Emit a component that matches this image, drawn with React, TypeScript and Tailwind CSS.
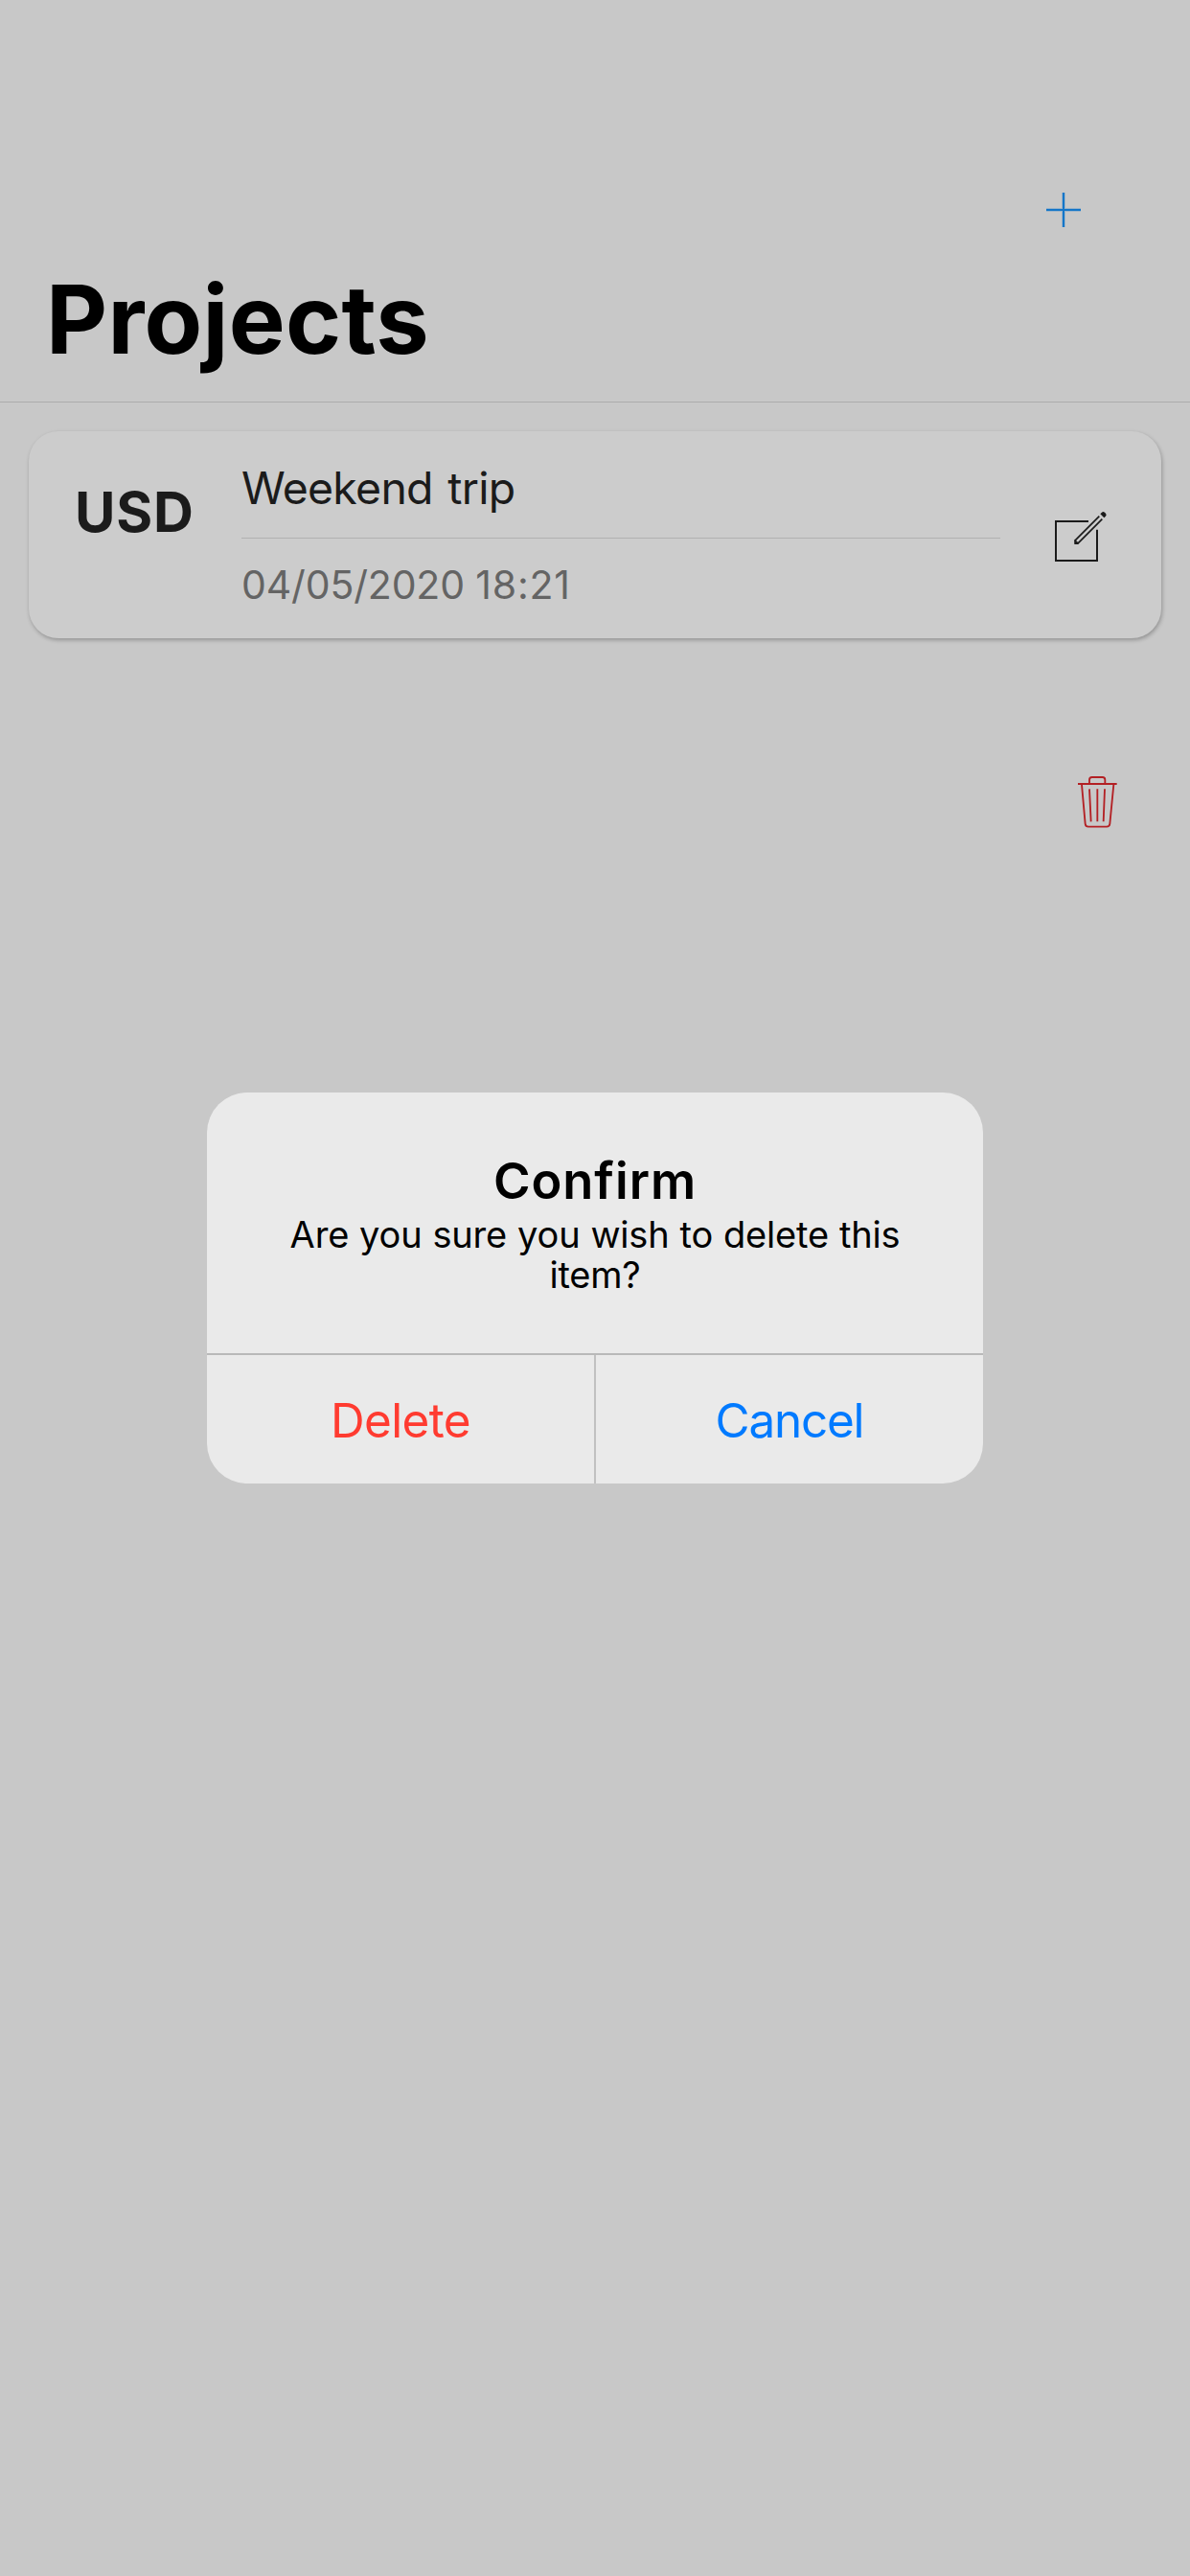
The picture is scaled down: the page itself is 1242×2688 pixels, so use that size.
function PlusIcon() {
  return (
    <svg width="36" height="36" viewBox="0 0 36 36" fill="none">
      <path d="M0 18H36M18 0V36" stroke="#1a7acb" strokeOpacity="0.25" strokeWidth="4" />
      <path d="M0 18H36M18 0V36" stroke="#1476c8" strokeWidth="2" />
    </svg>
  );
}

function EditIcon() {
  return (
    <svg width="56" height="56" viewBox="60 66 168 168" fill="none" stroke="#1b1b1b">
      <path d="M168 102H66V225H195V128" strokeWidth="6" />
      <path d="M202 86L128 160V169H137L211 95" strokeWidth="5" />
      <path d="M123.500 158L138 172L136 174H124Z" fill="#1b1b1b" stroke="none" />
      <path d="M205 79L210 74Q214 70 219 74L222 77Q226 82 222 86L217 91Z" fill="#1b1b1b" stroke="none" />
    </svg>
  );
}

function TrashIcon() {
  return (
    <svg width="43" height="58" viewBox="72 54 129 174" fill="none" stroke="#b32024" strokeWidth="5.5">
      <path d="M75 84H197" strokeWidth="6" />
      <path d="M111 84V71Q111 63 119 63H152Q160 63 160 71V84" />
      <path d="M87 86L98 209Q99 218 108 218H165Q174 218 175 209L187 86" />
      <path d="M111 100L116 202M136 100V202M159 100L155 202" />
    </svg>
  );
}

function Header() {
  return (
    <header className="border-b border-[#acacac] pt-[201px] pb-[26px]">
      <div className="flex justify-end pr-[114px]">
        <button aria-label="Add project">
          <PlusIcon />
        </button>
      </div>
      <h1 className="mt-9 pl-12 text-[99px] leading-[120px] font-bold tracking-[0.28px] text-black">Projects</h1>
    </header>
  );
}

function ProjectRow() {
  return (
    <article className="mx-[30px] mt-[30px] flex h-[216px] rounded-[31px] bg-[#cccccc] text-[#1b1b1b] shadow-[1px_2px_4px_rgba(0,0,0,0.27)]">
      <div className="w-[222px] pt-12 pl-12 text-[58px] leading-[72px] font-bold tracking-[0.8px]">USD</div>
      <div className="w-[792px] pt-[29px]">
        <div className="text-[46.4px] leading-[60px] tracking-[-0.7px] [word-spacing:3px]">Weekend trip</div>
        <div className="mt-[22px] h-px bg-[#b1b1b1]" />
        <div className="mt-[23px] text-[41px] leading-[50px] tracking-[-0.15px] text-[#646464]">
          04/05/2020 <span className="tracking-[0.8px]">18:21</span>
        </div>
      </div>
      <button aria-label="Edit project" className="mt-[82px] ml-14 h-14">
        <EditIcon />
      </button>
    </article>
  );
}

function ConfirmDialog() {
  return (
    <div className="absolute inset-0 flex items-center justify-center">
      <div
        role="alertdialog"
        className="flex h-[408.67px] w-[810px] flex-col overflow-hidden rounded-[42px] bg-[#eaeaea] text-center text-black"
      >
        <div className="flex-1 pt-[60.33px]">
          <h2 className="text-[52.4px] leading-[64px] font-semibold tracking-[0.96px]">Confirm</h2>
          <p className="mx-auto mt-[3px] w-[690px] text-[38px] leading-[42px] tracking-[-0.18px] [word-spacing:0.5px]">
            Are you sure you wish to delete this item?
          </p>
        </div>
        <div className="flex h-[136px] border-t-2 border-[#b9b9b9] text-[49.4px] leading-[60px]">
          <button className="flex-1 border-r border-[#c1c1c1] pt-[2px] tracking-[-0.6px] text-[#ff3b30]">Delete</button>
          <button className="flex-1 border-l border-[#c1c1c1] pt-[2px] tracking-[-1.2px] text-[#007aff]">Cancel</button>
        </div>
      </div>
    </div>
  );
}

export default function App() {
  return (
    <div className="relative h-[2688px] w-[1242px] overflow-hidden bg-[#c8c8c8] font-['Inter',sans-serif]">
      <Header />
      <main>
        <ProjectRow />
        <div className="mt-[142px] flex justify-end pr-[75px]">
          <button aria-label="Delete project">
            <TrashIcon />
          </button>
        </div>
      </main>
      <ConfirmDialog />
    </div>
  );
}
